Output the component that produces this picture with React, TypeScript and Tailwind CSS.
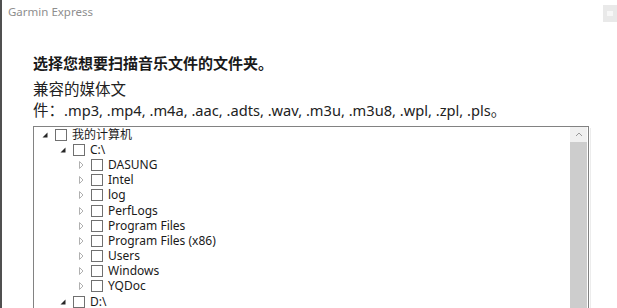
import React from "react";

type Node = { label: string; level: number; expanded: boolean };

const nodes: Node[] = [
  { label: "我的计算机", level: 0, expanded: true },
  { label: "C:\\", level: 1, expanded: true },
  { label: "DASUNG", level: 2, expanded: false },
  { label: "Intel", level: 2, expanded: false },
  { label: "log", level: 2, expanded: false },
  { label: "PerfLogs", level: 2, expanded: false },
  { label: "Program Files", level: 2, expanded: false },
  { label: "Program Files (x86)", level: 2, expanded: false },
  { label: "Users", level: 2, expanded: false },
  { label: "Windows", level: 2, expanded: false },
  { label: "YQDoc", level: 2, expanded: false },
  { label: "D:\\", level: 1, expanded: true },
];

function Arrow({ expanded }: { expanded: boolean }) {
  if (expanded) {
    return (
      <svg width="6" height="6" viewBox="0 0 6 6">
        <polygon points="5.5,0.5 5.5,5.5 0.5,5.5" fill="#262626" />
      </svg>
    );
  }
  return (
    <svg width="6" height="8" viewBox="0 0 6 8">
      <polygon points="1.5,0.5 5,4 1.5,7.5" fill="none" stroke="#b0b0b0" strokeWidth="1" />
    </svg>
  );
}

const indentClass = ["pl-[8px]", "pl-[26px]", "pl-[44px]"];

export default function App() {
  return (
    <div
      className="relative w-[617px] h-[308px] overflow-hidden bg-white border-l-2 border-[#505050]"
      style={{ fontFamily: '"Noto Sans", "Noto Sans CJK SC", sans-serif' }}
    >
      <div className="h-[24px] flex items-center pl-[6px] text-[11.5px] text-[#8e8e8e]">
        Garmin Express
      </div>
      <div className="absolute top-[5px] left-[601px] w-[16px] h-[17px] bg-[#e9e9e9]">
        <div className="absolute top-[6px] left-[4px] w-[6px] h-[5px] bg-[#f7f7f7]" />
      </div>

      <div className="pl-[31px] pt-[29px] text-[#1a1a1a]">
        <div className="text-[15px] font-bold leading-[20px]">
          选择您想要扫描音乐文件的文件夹。
        </div>
        <div className="mt-[6px] text-[15.5px] leading-[21px] text-[#222]">
          <div>兼容的媒体文</div>
          <div>
            件：<span className="text-[14.65px]">.mp3, .mp4, .m4a, .aac, .adts, .wav, .m3u, .m3u8, .wpl, .zpl, .pls</span>。
          </div>
        </div>

        <div className="mt-[5px] w-[556px] h-[200px] border border-[#828282] flex">
          <div className="flex-1">
            {nodes.map((n, i) => (
              <div
                key={i}
                className={`h-[15.2px] flex items-center ${indentClass[n.level]}`}
              >
                <div className="w-[6px] flex items-center">
                  <Arrow expanded={n.expanded} />
                </div>
                <div className="ml-[7px] w-[12px] h-[12px] border border-[#707070] bg-white shrink-0" />
                <div className="ml-[5px] text-[12px] leading-[14px] text-[#1a1a1a] whitespace-nowrap">{n.label}</div>
              </div>
            ))}
          </div>
          <div className="w-[17px] flex flex-col mr-[1px]">
            <div className="h-[15px] bg-[#f0f0f0] flex items-center justify-center">
              <svg width="8" height="5" viewBox="0 0 8 5">
                <polyline points="1,4 4,1 7,4" fill="none" stroke="#9a9a9a" strokeWidth="1" />
              </svg>
            </div>
            <div className="flex-1 bg-[#cdcdcd]" />
          </div>
        </div>
      </div>
      <div className="absolute top-[128px] left-[588px] w-[1px] h-[180px] bg-[#ececec]" />
    </div>
  );
}
